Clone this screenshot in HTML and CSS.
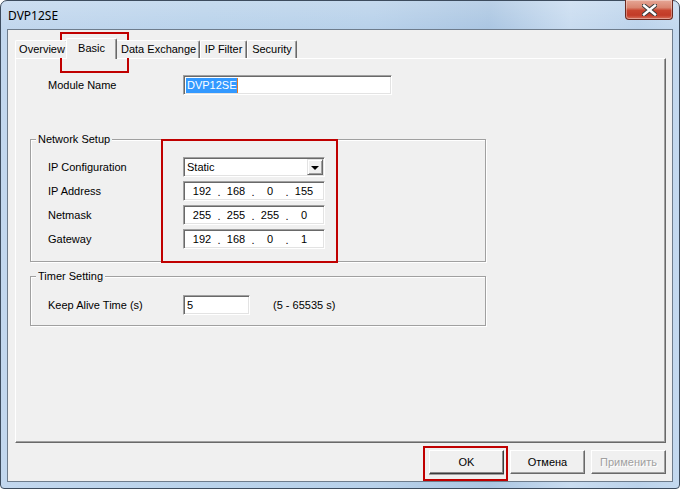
FILE: index.html
```html
<!DOCTYPE html>
<html>
<head>
<meta charset="utf-8">
<title>DVP12SE</title>
<link rel="stylesheet" href="styles.css">
</head>
<body>
<div class="window">
  <div class="titlebar">
    <span class="title">DVP12SE</span>
    <div class="close">
      <svg width="15" height="12" viewBox="0 0 15 12">
        <path d="M2 1.5 L13 10.5 M13 1.5 L2 10.5" stroke="#3b3b3b" stroke-width="4.4" stroke-linecap="square"/>
        <path d="M2 1.5 L13 10.5 M13 1.5 L2 10.5" stroke="#ffffff" stroke-width="2.4" stroke-linecap="square"/>
      </svg>
    </div>
  </div>
  <div class="client">
    <div class="tabctl">
      <div class="tabstrip">
        <div class="tab t-overview">Overview</div>
        <div class="tab tab-active t-basic">Basic</div>
        <div class="tab t-data">Data Exchange</div>
        <div class="tab t-ipf">IP Filter</div>
        <div class="tab t-sec">Security</div>
      </div>
      <div class="panel">
        <div class="row module-row">
          <span class="lbl">Module Name</span>
          <div class="edit edit-name"><span class="sel">DVP12SE</span><span class="caret"></span></div>
        </div>

        <div class="group group-net">
          <div class="legend">Network Setup</div>
          <div class="rows">
            <div class="row">
              <span class="lbl">IP Configuration</span>
              <div class="edit combo"><span class="combo-text">Static</span><span class="drop"><span class="tri"></span></span></div>
            </div>
            <div class="row">
              <span class="lbl">IP Address</span>
              <div class="edit ip"><span class="oct">192</span><span class="dot">.</span><span class="oct">168</span><span class="dot">.</span><span class="oct">0</span><span class="dot">.</span><span class="oct">155</span></div>
            </div>
            <div class="row">
              <span class="lbl">Netmask</span>
              <div class="edit ip"><span class="oct">255</span><span class="dot">.</span><span class="oct">255</span><span class="dot">.</span><span class="oct">255</span><span class="dot">.</span><span class="oct">0</span></div>
            </div>
            <div class="row">
              <span class="lbl">Gateway</span>
              <div class="edit ip"><span class="oct">192</span><span class="dot">.</span><span class="oct">168</span><span class="dot">.</span><span class="oct">0</span><span class="dot">.</span><span class="oct">1</span></div>
            </div>
          </div>
        </div>

        <div class="group group-timer">
          <div class="legend">Timer Setting</div>
          <div class="row">
            <span class="lbl">Keep Alive Time (s)</span>
            <div class="keep">
              <div class="edit edit-keep">5</div>
              <span class="range">(5 - 65535 s)</span>
            </div>
          </div>
        </div>
      </div>
    </div>
    <div class="buttons">
      <div class="btn btn-default">OK</div>
      <div class="btn">Отмена</div>
      <div class="btn btn-disabled">Применить</div>
    </div>
  </div>
  <div class="mark mark-tab"></div>
  <div class="mark mark-net"></div>
  <div class="mark mark-ok"></div>
</div>
</body>
</html>
```
FILE: styles.css
```css
* { box-sizing: border-box; }
html, body { margin: 0; padding: 0; }
body {
  width: 680px;
  height: 489px;
  background: #ffffff;
  font-family: "Liberation Sans", Arial, sans-serif;
  font-size: 11px;
  color: #000;
  overflow: hidden;
}
.window {
  position: relative;
  width: 680px;
  height: 489px;
  border: 1px solid #3d4c5e;
  border-radius: 7px 7px 4px 4px;
  background:
    linear-gradient(180deg, rgba(255,255,255,0.18) 0px, rgba(255,255,255,0) 28px),
    linear-gradient(90deg, #c2d7ee 0%, #bad3eb 30%, #b8d1ea 55%, #abc6e2 72%, #c9dcf0 84%, #bcd3eb 94%, #c4d9ef 100%);
  display: flex;
  flex-direction: column;
}
.titlebar {
  height: 28px;
  display: flex;
  align-items: flex-start;
  padding-left: 7px;
}
.title {
  font-family: "Noto Sans", "Open Sans", sans-serif;
  font-size: 12px;
  line-height: 28px;
  color: #000;
  padding-top: 1px;
}
.close {
  margin-left: auto;
  margin-right: 6px;
  margin-top: -1px;
  width: 48px;
  height: 20px;
  border: 1px solid #6b2a20;
  border-top: none;
  border-radius: 0 0 4px 4px;
  background: linear-gradient(180deg, #e6a796 0%, #d98570 40%, #c8452f 55%, #c23b27 80%, #d8705a 100%);
  box-shadow: inset 0 0 0 1px rgba(255,255,255,0.35);
  display: flex;
  align-items: center;
  justify-content: center;
}
.close svg { display: block; margin-top: 0px; }

.client {
  margin: 0 6px;
  height: 453px;
  border: 1px solid #6e7c8c;
  background: #f0f0f0;
  padding: 8px 0 0 7px;
}

/* tabs */
.tabstrip {
  height: 20px;
  display: flex;
  align-items: flex-end;
  position: relative;
  z-index: 2;
}
.tab {
  height: 18px;
  line-height: 17px;
  text-align: center;
  white-space: nowrap;
  overflow: hidden;
  background: #f0f0f0;
  border: 1px solid;
  border-color: #ffffff #696969 transparent #ffffff;
  border-bottom: none;
  border-radius: 2px 2px 0 0;
  box-shadow: inset -1px 0 0 #a0a0a0;
}
.t-overview { width: 53px; padding-left: 1px; }
.t-basic { width: 47px; }
.t-data { width: 85px; text-align: left; padding-left: 5px; }
.t-ipf { width: 47px; }
.t-sec { width: 50px; }
.tab-active {
  height: 21px;
  margin: 0 -2px -1px;
  width: 51px;
  line-height: 18px;
  position: relative;
  z-index: 3;
}
.panel {
  width: 651px;
  height: 385px;
  border: 1px solid;
  border-color: #ffffff #696969 #696969 #ffffff;
  box-shadow: inset -1px -1px 0 #a0a0a0;
  padding: 16px 0 0 0;
}

/* rows */
.row {
  display: grid;
  grid-template-columns: 135px auto;
  align-items: center;
  height: 20px;
}
.lbl { white-space: nowrap; }
.module-row { padding-left: 32px; }

.edit {
  height: 20px;
  background: #ffffff;
  border: 1px solid;
  border-color: #a0a0a0 #ffffff #ffffff #a0a0a0;
  box-shadow: inset 1px 1px 0 #696969, inset -1px -1px 0 #e3e3e3;
  display: flex;
  align-items: center;
  white-space: nowrap;
}
.edit-name { width: 209px; padding-left: 2px; }
.sel {
  background: #3399ff;
  color: #ffffff;
  height: 15px;
  line-height: 15px;
  padding: 0 0 0 1px;
}
.caret {
  width: 1px;
  height: 15px;
  background: #e07b2c;
}

.group {
  position: relative;
  margin-left: 14px;
  width: 456px;
  border: 1px solid #a0a0a0;
  box-shadow: 1px 1px 0 #ffffff, inset 1px 1px 0 #ffffff;
  padding-left: 17px;
}
.legend {
  position: absolute;
  top: -7px;
  left: 5px;
  padding: 0 2px;
  line-height: 13px;
  background: #f0f0f0;
}
.group-net {
  margin-top: 44px;
  padding-top: 17px;
  padding-bottom: 12px;
}
.rows {
  display: flex;
  flex-direction: column;
  gap: 4px;
}
.group-timer {
  margin-top: 14px;
  padding-top: 18px;
  padding-bottom: 10px;
}

.combo {
  width: 142px;
  padding-left: 3px;
  position: relative;
}
.combo-text { flex: 1; }
.drop {
  width: 16px;
  height: 16px;
  margin-right: 1px;
  background: #f0f0f0;
  border: 1px solid;
  border-color: #e3e3e3 #696969 #696969 #e3e3e3;
  box-shadow: inset 1px 1px 0 #ffffff, inset -1px -1px 0 #a0a0a0;
  display: flex;
  align-items: center;
  justify-content: center;
}
.tri {
  width: 0;
  height: 0;
  border-left: 4px solid transparent;
  border-right: 4px solid transparent;
  border-top: 4px solid #000;
  margin-top: 1px;
}

.ip {
  width: 142px;
  padding-left: 4px;
}
.oct {
  width: 28px;
  text-align: center;
}
.dot {
  width: 6px;
  text-align: center;
  position: relative;
  top: 1px;
}

.keep {
  display: flex;
  align-items: center;
}
.edit-keep { width: 67px; padding-left: 3px; }
.range { margin-left: 23px; }

/* buttons */
.buttons {
  display: flex;
  justify-content: flex-end;
  gap: 6px;
  padding-right: 6px;
  margin-top: 7px;
}
.btn {
  width: 75px;
  height: 24px;
  display: flex;
  align-items: center;
  justify-content: center;
  background: #f0f0f0;
  border: 1px solid;
  border-color: #ffffff #696969 #696969 #ffffff;
  box-shadow: inset -1px -1px 0 #a0a0a0;
}
.btn-default {
  border-color: #ffffff #3c3c3c #3c3c3c #ffffff;
  box-shadow: inset -1px -1px 0 #8a8a8a, 0 1px 0 #a0a0a0;
}
.btn-disabled {
  color: #a0a0a0;
  text-shadow: 1px 1px 0 #ffffff;
}

/* red annotation boxes */
.mark {
  position: absolute;
  border: 2px solid #c00000;
  pointer-events: none;
}
.mark-tab { left: 59px; top: 31px; width: 69px; height: 41px; }
.mark-net { left: 160px; top: 138px; width: 177px; height: 124px; }
.mark-ok { left: 422px; top: 445px; width: 85px; height: 35px; }
```
